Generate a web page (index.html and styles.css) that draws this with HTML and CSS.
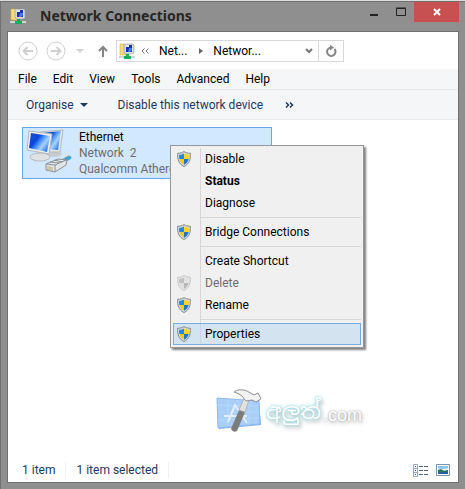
FILE: index.html
```html
<!DOCTYPE html>
<html lang="en">
<head>
  <meta charset="UTF-8" />
  <meta name="viewport" content="width=device-width, initial-scale=1.0"/>
  <title>Network Connections</title>
  <link rel="stylesheet" href="styles.css">
</head>
<body>
  <!-- shared icons -->
  <svg class="defs" width="0" height="0" aria-hidden="true">
    <symbol id="net" viewBox="0 0 16 16">
      <path d="M1 1h4l1 1h3v10H1z" fill="#f5dc7a" stroke="#cfae4a" stroke-width=".6"/>
      <path d="M5 1h9l1 1v8l-2 1H6L5 9z" fill="#d8dce0" stroke="#8d959c" stroke-width=".6"/>
      <path d="M7 2h6v7H7z" fill="#1733b0"/>
      <path d="M7 2h3v2H7z" fill="#dbe6ff"/>
      <path d="M10 5h3v2l-2 2H9z" fill="#4a78e8"/>
      <path d="M0 13h16v2H0z" fill="#cfd3d3"/>
      <path d="M7 11h3v2h2v3H5v-3h2z" fill="#12b05a"/>
    </symbol>
    <symbol id="shield" viewBox="0 0 14 16">
      <path d="M7 .5C5.500 1.800 3 2.300 .7 2.200C.3 8 1.500 13 7 15.500C12.500 13 13.700 8 13.300 2.200C11 2.300 8.500 1.800 7 .5z" fill="#d9dcdf" stroke="#85898d"/>
      <path d="M7 2.500V8H2.300C2 6.500 2 5 2.200 3.800C4 3.800 5.800 3.300 7 2.500z" fill="#2688dc"/>
      <path d="M7 2.500V8h4.700C12 6.500 12 5 11.800 3.800C10 3.800 8.200 3.300 7 2.500z" fill="#fbd32c"/>
      <path d="M7 8v5.800C4.500 12.500 2.900 10.700 2.300 8z" fill="#fbc81f"/>
      <path d="M7 8v5.800C9.500 12.500 11.100 10.700 11.700 8z" fill="#1c76cf"/>
    </symbol>
  </svg>

  <header class="titlebar">
    <svg class="icon16" aria-hidden="true"><use href="#net"/></svg>
    <h1>Network Connections</h1>
    <div class="controls">
      <button aria-label="Minimise"><svg width="10" height="10"><path d="M1 8h8" stroke="#222" stroke-width="2"/></svg></button>
      <button aria-label="Maximise"><svg width="10" height="10"><path d="M.5 1.500h9v7h-9zM0 1h10" fill="none" stroke="#222"/></svg></button>
      <button class="close" aria-label="Close"><svg width="8" height="8"><path d="M1 1l6 6M7 1l-6 6" stroke="#fff" stroke-width="2"/></svg></button>
    </div>
  </header>

  <main class="client">
    <nav class="navrow">
      <button aria-label="Back"><svg width="20" height="20" fill="none" stroke="#cfcfcf"><circle cx="10" cy="10" r="9"/><path d="M15 10H6M9.500 6L5.500 10l4 4" stroke-width="2"/></svg></button>
      <button aria-label="Forward"><svg width="20" height="20" fill="none" stroke="#cfcfcf"><circle cx="10" cy="10" r="9"/><path d="M5 10h9M10.500 6l4 4-4 4" stroke-width="2"/></svg></button>
      <button class="recent" aria-label="Recent locations"><svg width="8" height="4"><path d="M0 0h8L4 4z" fill="#d4d4d4"/></svg></button>
      <button class="up" aria-label="Up"><svg width="10" height="12" fill="none" stroke="#858585" stroke-width="2"><path d="M5 12V2M1 6l4-4 4 4"/></svg></button>
      <div class="address">
        <svg class="icon16" aria-hidden="true"><use href="#net"/></svg>
        <svg class="back-chevrons" width="8" height="6" fill="none" stroke="#777" aria-hidden="true"><path d="M3.500 0.500L1 3l2.500 2.500M7.500 .5L5 3l2.500 2.500"/></svg>
        <a href="#">Net...</a>
        <svg class="crumb-arrow" width="4" height="6" aria-hidden="true"><path d="M0 0l4 3-4 3z" fill="#666"/></svg>
        <a href="#">Networ...</a>
        <button class="drop" aria-label="Previous locations"><svg width="8" height="6" fill="none" stroke="#777" stroke-width="2"><path d="M1 1l3 3 3-3"/></svg></button>
        <button class="refresh" aria-label="Refresh"><svg width="12" height="12" fill="none" stroke="#858585" stroke-width="2"><path d="M9.500 4A4.200 4.200 0 1 1 6 2.500"/><path d="M5 0l4 2.500L5 5.500z" fill="#858585" stroke="none"/></svg></button>
      </div>
    </nav>

    <nav class="menubar">
      <button>File</button>
      <button>Edit</button>
      <button>View</button>
      <button>Tools</button>
      <button>Advanced</button>
      <button>Help</button>
    </nav>

    <div class="toolbar">
      <button>Organise <svg width="8" height="4"><path d="M0 0h8L4 4z" fill="#1e395b"/></svg></button>
      <button>Disable this network device</button>
      <button class="more" aria-label="More commands"><svg width="9" height="6" fill="none" stroke="#1e395b" stroke-width="1.500"><path d="M1 .5L3.500 3 1 5.500M5 .5L7.500 3 5 5.500"/></svg></button>
    </div>

    <section class="content">
      <div class="connection">
        <svg width="49" height="48" viewBox="0 0 49 48" aria-hidden="true">
          <defs>
            <linearGradient id="screen" x1="0" y1="0" x2="1" y2=".7">
              <stop offset="0" stop-color="#1a4fd0"/><stop offset=".4" stop-color="#0b48d8"/><stop offset=".55" stop-color="#3f8bfa"/><stop offset=".75" stop-color="#a9d2ff"/><stop offset="1" stop-color="#2d7df2"/>
            </linearGradient>
          </defs>
          <ellipse cx="29" cy="25" rx="8" ry="3" fill="#c6cbd0"/>
          <path d="M15 3l23-2-3 22-19 0z" fill="#e4e6e8" stroke="#b4b9be"/>
          <path d="M17 4l19-2-3 19-15-1z" fill="url(#screen)"/>
          <path d="M13 22h8l1 6H12z" fill="#a9afb5"/>
          <ellipse cx="15" cy="28" rx="10" ry="4" fill="#dfe2e4" stroke="#b4b9be"/>
          <path d="M4 2l23 3-3 20-22-4z" fill="#eceded" stroke="#b4b9be"/>
          <path d="M6 4l19 3-3 16-18-4z" fill="url(#screen)"/>
          <path d="M36 33l9-5" stroke="#8a9298" stroke-width="4"/>
          <path d="M38 32l8-4" stroke="#3ba7d8" stroke-width="3"/>
          <path d="M21 35l12-5 9 1-1 5-11 7-9-2z" fill="#e3e6e8" stroke="#8a9196"/>
          <path d="M21 35l9 1 11-5M30 36v7M25 33l9 1M29 31l8 2" fill="none" stroke="#8a9196"/>
          <path d="M23 37v4M25 37v4M27 38v4" stroke="#b9a868"/>
        </svg>
        <div class="details">
          <strong>Ethernet</strong>
          <span>Network&nbsp; 2</span>
          <span>Qualcomm Atheros</span>
        </div>

        <menu class="context">
          <li><button><svg><use href="#shield"/></svg>Disable</button></li>
          <li><button class="default">Status</button></li>
          <li><button>Diagnose</button></li>
          <li class="sep"></li>
          <li><button><svg><use href="#shield"/></svg>Bridge Connections</button></li>
          <li class="sep"></li>
          <li><button>Create Shortcut</button></li>
          <li><button disabled><svg><use href="#shield"/></svg>Delete</button></li>
          <li><button><svg><use href="#shield"/></svg>Rename</button></li>
          <li class="sep"></li>
          <li><button class="hover"><svg><use href="#shield"/></svg>Properties</button></li>
        </menu>
      </div>

      <div class="watermark">
        <svg width="50" height="46" viewBox="0 0 50 46" aria-hidden="true">
          <path d="M4 11l41 2 2 24-42 4z" fill="#7fb0e8"/>
          <path d="M3 10l42 3 1 23-42 4z" fill="#a9cff8" stroke="#8cbbed"/>
          <path d="M3 17l42 1M4 24h41M4 32l41-2M14 11v27M24 12v25M35 13v24" stroke="#bcdafa" stroke-width=".7"/>
          <path d="M14 34l7-17 12 18M10 28h23" fill="none" stroke="#e2eefd" stroke-width="2"/>
          <path d="M25 22l6 2-8 19q-4 2-6-2z" fill="#7c7c7c"/>
          <path d="M30 10l5 2-4 12-6-2z" fill="#e2e2e2" stroke="#a0a0a0" stroke-width=".6"/>
          <path d="M20 4Q25 0 33 3l7 4 4-2 3 6-5 3-4-2-6 1-4-5q-4-3-8-4z" fill="#f2f2f2" stroke="#929292"/>
        </svg>
        <span class="brand" lang="si">අලුත්</span>
        <span class="domain">.com</span>
      </div>
    </section>

    <footer class="status">
      <span>1 item</span>
      <span>1 item selected</span>
      <div class="views">
        <button aria-label="Details"><svg width="15" height="13"><path d="M.5 .5h4v12h-4zM.5 4.500h4M.5 8.500h4" fill="#fff" stroke="#9aa9bb"/><path d="M6 2.500h4m1 0h4M6 6.500h4m1 0h4M6 10.500h4m1 0h4" stroke="#4b6482"/><path d="M2 2h1v1H2z" fill="#188038"/><path d="M2 6h1v1H2z" fill="#d00"/><path d="M2 10h1v1H2z" fill="#24c"/></svg></button>
        <button aria-label="Large icons"><svg width="14" height="12"><path d="M.5 .5h13v11H.5z" fill="#fff" stroke="#7f93ab"/><path d="M2 2h10v8H2z" fill="#8cc3ee"/><path d="M2 4l4 1 6-1v2L2 7z" fill="#e3f1fb"/><path d="M2 6l3-1 3 2 4-1v2H2z" fill="#2e7355"/><path d="M2 8h10v2H2z" fill="#2a5fa0"/></svg></button>
      </div>
    </footer>
  </main>
</body>
</html>
```
FILE: styles.css
```css
* {
  box-sizing: border-box;
}
body {
  margin: 0;
  min-height: 100vh;
  display: flex;
  flex-direction: column;
  padding: 0 6px 6px 7px;
  background-color: #8f8f8f;
  border-top: 1px solid #d9dddb;
  font-family: Roboto, "Open Sans", sans-serif;
  font-size: 12px;
  line-height: 16px;
  color: #000;
  box-shadow: inset 1px 1px #707070;
}
button {
  display: flex;
  align-items: center;
  padding: 0;
  border: none;
  background: none;
  font: inherit;
  color: inherit;
}
svg {
  flex: none;
}
a {
  color: inherit;
  text-decoration: none;
}
.defs {
  position: absolute;
}
.icon16 {
  width: 16px;
  height: 16px;
}

/* title bar */
.titlebar {
  display: flex;
  align-items: center;
  height: 30px;
  padding-left: 3px;
}
h1 {
  flex: 1;
  margin: 0 0 0 14px;
  font-family: "Noto Sans", "Open Sans", sans-serif;
  font-size: 14px;
  line-height: 20px;
  font-weight: bold;
  color: #262626;
}
.controls {
  display: flex;
  align-self: flex-start;
  padding-top: 1px;
}
.controls button {
  width: 27px;
  height: 20px;
  justify-content: center;
}
.controls .close {
  width: 45px;
  background-color: #c75050;
}

/* window body */
.client {
  flex: 1;
  display: flex;
  flex-direction: column;
  background-color: #fff;
  border: 1px solid #707070;
}
.navrow {
  display: flex;
  align-items: center;
  height: 37px;
  padding-left: 10px;
  gap: 8px;
}
.recent {
  margin-left: 2px;
}
.up {
  margin: 0 0 0 6px;
}
.address {
  display: flex;
  align-items: center;
  width: 228px;
  height: 22px;
  padding-left: 2px;
  border: 1px solid #d9d9d9;
}
.back-chevrons {
  margin: 0 10px 0 6px;
}
.crumb-arrow {
  margin: 0 10px 0 12px;
}
.drop {
  margin: 0 5px 0 auto;
}
.refresh {
  width: 25px;
  height: 20px;
  justify-content: center;
  border-left: 1px solid #d9d9d9;
}
.menubar {
  display: flex;
  height: 21px;
  padding-left: 10px;
  gap: 16px;
  background-color: #f5f6f7;
  border-bottom: 1px solid #e8e9ea;
}
.toolbar {
  display: flex;
  height: 30px;
  padding-left: 18px;
  gap: 30px;
  background-color: #f5f6f7;
  border-bottom: 1px solid #ebecee;
  color: #1e395b;
}
.toolbar button {
  gap: 6px;
}
.toolbar .more {
  margin-left: -8px;
}

/* connections list */
.content {
  flex: 1;
  position: relative;
  padding: 7px 14px;
}
.connection {
  position: relative;
  display: flex;
  gap: 5px;
  width: 250px;
  height: 52px;
  padding: 1px 2px;
  background-color: #d1e8ff;
  border: 1px solid #66a7e8;
}
.details {
  display: flex;
  flex-direction: column;
  white-space: nowrap;
  color: #6d6d6d;
}
.details strong {
  font-weight: normal;
  color: #000;
}

/* right-click menu */
.context {
  position: absolute;
  left: 147px;
  top: 17px;
  width: 194px;
  margin: 0;
  padding: 2px;
  list-style: none;
  background: linear-gradient(#d7d7d7, #d7d7d7) 29px 2px / 1px calc(100% - 4px) no-repeat #f0f0f0;
  border: 1px solid #979797;
  box-shadow: 2px 2px 2px #00000080;
}
.context button {
  position: relative;
  width: 100%;
  height: 22px;
  padding-left: 31px;
  border: 1px solid transparent;
}
.context .default {
  font-weight: bold;
}
.context .hover {
  background-color: #b5d6f080;
  border-color: #78aee5;
}
.context button:disabled {
  color: #6d6d6d;
}
.context button:disabled svg {
  filter: grayscale(1);
  opacity: .4;
}
.context svg {
  position: absolute;
  left: 3px;
  width: 14px;
  height: 16px;
}
.sep {
  height: 7px;
  padding: 3px 0;
  margin-left: 28px;
}
.sep::before {
  content: "";
  display: block;
  height: 1px;
  background-color: #d7d7d7;
}

/* site watermark */
.watermark {
  position: absolute;
  right: 96px;
  bottom: 24px;
  display: flex;
  align-items: center;
  gap: 2px;
  color: #fff;
}
.brand {
  font-family: "Noto Sans Sinhala", "Noto Sans", sans-serif;
  font-size: 22px;
  line-height: 40px;
  text-shadow: 0 0 2px #8fd3df, 0 0 5px #9fdfea, 2px 3px 4px #aaa;
}
.domain {
  padding-top: 8px;
  font-family: "Liberation Sans", sans-serif;
  font-size: 18px;
  line-height: 20px;
  text-shadow: 0 0 2px #999, 1px 2px 4px #aaa;
}

/* status bar */
.status {
  display: flex;
  align-items: center;
  height: 24px;
  padding: 0 8px 0 14px;
  color: #1e395b;
}
.status span {
  padding-right: 10px;
  margin-right: 10px;
  border-right: 1px solid #f0f0f0;
}
.views {
  display: flex;
  gap: 8px;
  margin-left: auto;
}
```
